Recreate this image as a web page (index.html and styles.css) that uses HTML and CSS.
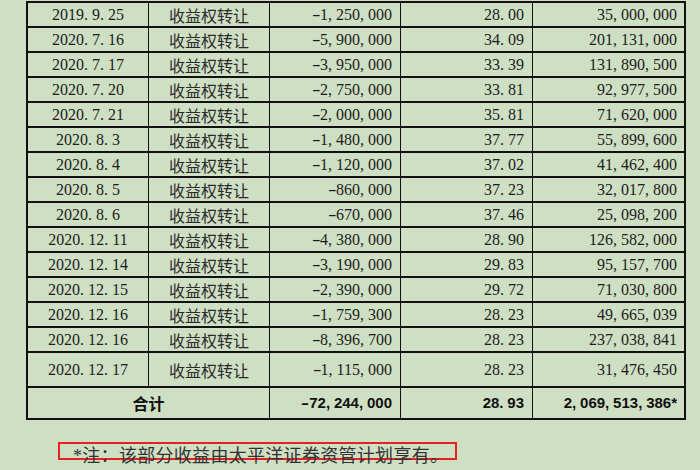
FILE: index.html
```html
<!DOCTYPE html>
<html lang="zh-CN">
<head>
<meta charset="utf-8">
<link rel="stylesheet" href="styles.css">
</head>
<body>
<div class="page">
  <div class="grid">
    <div class="c d">2019<i>.</i>9<i>.</i>25</div><div class="c t">收益权转让</div><div class="c n"><i class="m">-</i>1<i>,</i>250<i>,</i>000</div><div class="c n">28<i>.</i>00</div><div class="c n e">35<i>,</i>000<i>,</i>000</div>
    <div class="c d">2020<i>.</i>7<i>.</i>16</div><div class="c t">收益权转让</div><div class="c n"><i class="m">-</i>5<i>,</i>900<i>,</i>000</div><div class="c n">34<i>.</i>09</div><div class="c n e">201<i>,</i>131<i>,</i>000</div>
    <div class="c d">2020<i>.</i>7<i>.</i>17</div><div class="c t">收益权转让</div><div class="c n"><i class="m">-</i>3<i>,</i>950<i>,</i>000</div><div class="c n">33<i>.</i>39</div><div class="c n e">131<i>,</i>890<i>,</i>500</div>
    <div class="c d">2020<i>.</i>7<i>.</i>20</div><div class="c t">收益权转让</div><div class="c n"><i class="m">-</i>2<i>,</i>750<i>,</i>000</div><div class="c n">33<i>.</i>81</div><div class="c n e">92<i>,</i>977<i>,</i>500</div>
    <div class="c d">2020<i>.</i>7<i>.</i>21</div><div class="c t">收益权转让</div><div class="c n"><i class="m">-</i>2<i>,</i>000<i>,</i>000</div><div class="c n">35<i>.</i>81</div><div class="c n e">71<i>,</i>620<i>,</i>000</div>
    <div class="c d">2020<i>.</i>8<i>.</i>3</div><div class="c t">收益权转让</div><div class="c n"><i class="m">-</i>1<i>,</i>480<i>,</i>000</div><div class="c n">37<i>.</i>77</div><div class="c n e">55<i>,</i>899<i>,</i>600</div>
    <div class="c d">2020<i>.</i>8<i>.</i>4</div><div class="c t">收益权转让</div><div class="c n"><i class="m">-</i>1<i>,</i>120<i>,</i>000</div><div class="c n">37<i>.</i>02</div><div class="c n e">41<i>,</i>462<i>,</i>400</div>
    <div class="c d">2020<i>.</i>8<i>.</i>5</div><div class="c t">收益权转让</div><div class="c n"><i class="m">-</i>860<i>,</i>000</div><div class="c n">37<i>.</i>23</div><div class="c n e">32<i>,</i>017<i>,</i>800</div>
    <div class="c d">2020<i>.</i>8<i>.</i>6</div><div class="c t">收益权转让</div><div class="c n"><i class="m">-</i>670<i>,</i>000</div><div class="c n">37<i>.</i>46</div><div class="c n e">25<i>,</i>098<i>,</i>200</div>
    <div class="c d">2020<i>.</i>12<i>.</i>11</div><div class="c t">收益权转让</div><div class="c n"><i class="m">-</i>4<i>,</i>380<i>,</i>000</div><div class="c n">28<i>.</i>90</div><div class="c n e">126<i>,</i>582<i>,</i>000</div>
    <div class="c d">2020<i>.</i>12<i>.</i>14</div><div class="c t">收益权转让</div><div class="c n"><i class="m">-</i>3<i>,</i>190<i>,</i>000</div><div class="c n">29<i>.</i>83</div><div class="c n e">95<i>,</i>157<i>,</i>700</div>
    <div class="c d">2020<i>.</i>12<i>.</i>15</div><div class="c t">收益权转让</div><div class="c n"><i class="m">-</i>2<i>,</i>390<i>,</i>000</div><div class="c n">29<i>.</i>72</div><div class="c n e">71<i>,</i>030<i>,</i>800</div>
    <div class="c d">2020<i>.</i>12<i>.</i>16</div><div class="c t">收益权转让</div><div class="c n"><i class="m">-</i>1<i>,</i>759<i>,</i>300</div><div class="c n">28<i>.</i>23</div><div class="c n e">49<i>,</i>665<i>,</i>039</div>
    <div class="c d">2020<i>.</i>12<i>.</i>16</div><div class="c t">收益权转让</div><div class="c n"><i class="m">-</i>8<i>,</i>396<i>,</i>700</div><div class="c n">28<i>.</i>23</div><div class="c n e">237<i>,</i>038<i>,</i>841</div>
    <div class="c d">2020<i>.</i>12<i>.</i>17</div><div class="c t">收益权转让</div><div class="c n"><i class="m">-</i>1<i>,</i>115<i>,</i>000</div><div class="c n">28<i>.</i>23</div><div class="c n e">31<i>,</i>476<i>,</i>450</div>
    <div class="c tot span2">合计</div><div class="c n tot"><i class="m">-</i>72<i>,</i>244<i>,</i>000</div><div class="c n tot">28<i>.</i>93</div><div class="c n e tot">2<i>,</i>069<i>,</i>513<i>,</i>386*</div>
  </div>
  <div class="note">*注：该部分收益由太平洋证券资管计划享有。</div>
</div>
</body>
</html>
```
FILE: styles.css
```css
html, body {
  margin: 0;
  padding: 0;
  background: #cfdfc4;
}
body {
  width: 700px;
  height: 470px;
  overflow: hidden;
  font-family: "Liberation Serif", "Noto Sans CJK SC", serif;
  color: #1c1c1c;
}
.page {
  padding: 1px 0 0 26px;
}
.grid {
  display: grid;
  grid-template-columns: 120px 120px 130px 131px 151px;
  grid-template-rows: repeat(14, 23px) 33px 30px;
  column-gap: 1px;
  row-gap: 2px;
  width: 656px;
  background: #111;
  border: 2px solid #111;
}
.c {
  background: #cfdfc4;
  display: flex;
  align-items: center;
  font-size: 16px;
  line-height: 18px;
  white-space: nowrap;
}
.c i {
  font-style: normal;
  display: inline-block;
  width: 8px;
  text-align: left;
}
.c i.m {
  text-align: right;
  transform: scaleX(1.6);
  transform-origin: 100% 50%;
  width: 5px;
  margin-left: 3px;
}
.d {
  justify-content: center;
}
.t {
  justify-content: center;
  font-family: "Noto Sans CJK SC", sans-serif;
  font-size: 16px;
  color: #2a2a2a;
}
.n {
  justify-content: flex-end;
  padding-right: 8px;
}
.n.e {
  padding-right: 7px;
}
.tot {
  font-family: "Liberation Sans", "Noto Sans CJK SC", sans-serif;
  font-weight: 700;
  font-size: 15px;
  color: #111;
}
.span2 {
  grid-column: span 2;
  justify-content: center;
  font-family: "Noto Sans CJK SC", sans-serif;
  font-size: 16px;
}
.note {
  margin: 22px 0 0 32px;
  width: 382px;
  height: 11px;
  padding: 3px 0 0 13px;
  border: 2px solid #e32222;
  font-family: "Liberation Serif", "Noto Sans CJK SC", serif;
  font-size: 18px;
  line-height: 18px;
  color: #333;
  white-space: nowrap;
  letter-spacing: 0.3px;
}
```
